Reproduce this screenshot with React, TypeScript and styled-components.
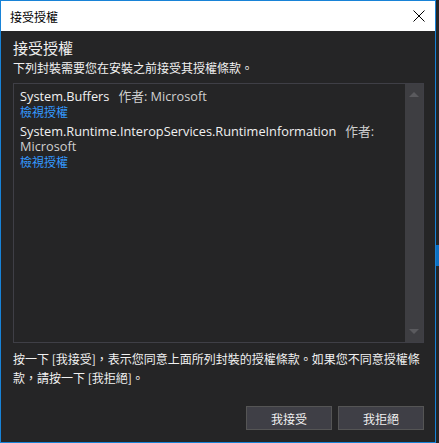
import React from "react";
import styled, { createGlobalStyle } from "styled-components";

const Global = createGlobalStyle`
  html, body { margin: 0; padding: 0; background: #2d2d30; }
  body { font-family: "Segoe UI", "Noto Sans", "Noto Sans CJK TC", sans-serif; }
`;

const Page = styled.div`
  display: flex;
  width: 439px;
  height: 443px;
  overflow: hidden;
`;

const Win = styled.div`
  width: 434px;
  height: 441px;
  border: 1px solid #1883d7;
  background: #252526;
  display: flex;
  flex-direction: column;
`;

const Side = styled.div`
  flex: 1;
  display: flex;
  flex-direction: column;
  background: #252526;
  padding-top: 245px;
`;

const SideTab = styled.div`
  height: 21px;
  background: #0e6fc0;
`;

const TitleBar = styled.div`
  height: 30px;
  background: #ffffff;
  display: flex;
  align-items: center;
  justify-content: space-between;
  padding: 0 10px 0 9px;
  font-family: "Noto Sans CJK TC", sans-serif;
  font-size: 12px;
  color: #000;
`;

const Close = styled.svg`
  width: 12px;
  height: 12px;
`;

const Body = styled.div`
  flex: 1;
  display: flex;
  flex-direction: column;
  padding: 6px 11px 12px 12px;
  color: #f1f1f1;
`;

const Heading = styled.div`
  font-family: "Noto Sans CJK TC", sans-serif;
  font-size: 15px;
  line-height: 22px;
`;

const Sub = styled.div`
  font-family: "Noto Sans CJK TC", sans-serif;
  font-size: 12px;
  line-height: 18px;
  margin-bottom: 6px;
`;

const ListBox = styled.div`
  height: 258px;
  border: 1px solid #3f3f46;
  display: flex;
`;

const Items = styled.div`
  flex: 1;
  padding: 5px 6px;
  display: flex;
  flex-direction: column;
  gap: 5px;
`;

const Item = styled.div`
  font-size: 12.75px;
  line-height: 15px;
`;

const Name = styled.span`
  font-family: "Segoe UI", "Open Sans", "Noto Sans CJK TC", sans-serif;
  color: #f1f1f1;
  margin-right: 9px;
`;

const Author = styled.span`
  font-family: "Segoe UI", "Open Sans", "Noto Sans CJK TC", sans-serif;
  color: #d0d0d0;
`;

const Link = styled.div`
  font-family: "Noto Sans CJK TC", sans-serif;
  font-size: 12px;
  line-height: 15px;
  color: #3399ff;
`;

const Scroll = styled.div`
  width: 18px;
  background: #3e3e42;
  display: flex;
  flex-direction: column;
  justify-content: space-between;
  align-items: center;
  padding: 8px 0;
`;

const Arrow = styled.div<{ $down?: boolean }>`
  width: 0;
  height: 0;
  border-left: 5px solid transparent;
  border-right: 5px solid transparent;
  ${(p) =>
    p.$down
      ? "border-top: 5px solid #5a5a5e;"
      : "border-bottom: 5px solid #5a5a5e;"}
`;

const Note = styled.div`
  font-family: "Noto Sans CJK TC", sans-serif;
  font-size: 12px;
  line-height: 19px;
  margin-top: 6px;
  color: #f1f1f1;
`;

const Buttons = styled.div`
  margin-top: auto;
  display: flex;
  justify-content: flex-end;
  gap: 6px;
`;

const Button = styled.button`
  width: 86px;
  height: 24px;
  background: #3f3f46;
  border: 1px solid #555555;
  color: #f1f1f1;
  font-family: "Noto Sans CJK TC", sans-serif;
  font-size: 12px;
  padding: 0;
`;

const packages = [
  { name: "System.Buffers", author: "Microsoft" },
  { name: "System.Runtime.InteropServices.RuntimeInformation", author: "Microsoft" },
];

export default function App() {
  return (
    <Page>
      <Global />
      <Win>
        <TitleBar>
          <span>接受授權</span>
          <Close viewBox="0 0 12 12">
            <path d="M0.5 0.5 L11.5 11.5 M11.5 0.5 L0.5 11.5" stroke="#000" strokeWidth="1" fill="none" />
          </Close>
        </TitleBar>
        <Body>
          <Heading>接受授權</Heading>
          <Sub>下列封裝需要您在安裝之前接受其授權條款。</Sub>
          <ListBox>
            <Items>
              {packages.map((p) => (
                <Item key={p.name}>
                  <Name>{p.name}</Name>
                  <Author>作者: {p.author}</Author>
                  <Link>檢視授權</Link>
                </Item>
              ))}
            </Items>
            <Scroll>
              <Arrow />
              <Arrow $down />
            </Scroll>
          </ListBox>
          <Note>
            按一下 [我接受]，表示您同意上面所列封裝的授權條款。如果您不同意授權條款，請按一下 [我拒絕]。
          </Note>
          <Buttons>
            <Button>我接受</Button>
            <Button>我拒絕</Button>
          </Buttons>
        </Body>
      </Win>
      <Side>
        <SideTab />
      </Side>
    </Page>
  );
}
